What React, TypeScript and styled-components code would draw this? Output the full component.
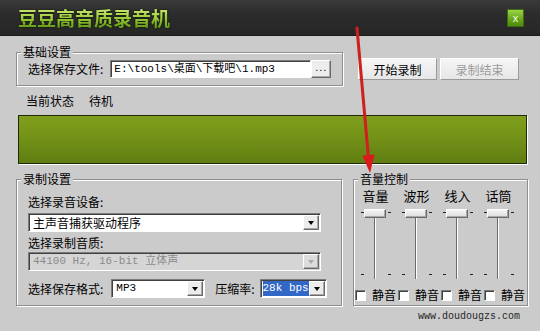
import styled, { createGlobalStyle } from "styled-components";

const GlobalStyle = createGlobalStyle`
  html, body {
    margin: 0;
    padding: 0;
    background: #cccbcc;
  }
  body {
    font-family: "Noto Sans CJK SC", "Liberation Sans", sans-serif;
    font-size: 12px;
    color: #000;
  }
`;

const MONO = `"Liberation Mono", "Noto Sans CJK SC", monospace`;

const channels = ["音量", "波形", "线入", "话筒"];

export default function App() {
  return (
    <>
      <GlobalStyle />
      <Window>
        <TitleBar>
          <Title>豆豆高音质录音机</Title>
          <CloseButton>x</CloseButton>
        </TitleBar>

        <Body>
          <TopRow>
            <Group $width={327} $height={34}>
              <Legend>基础设置</Legend>
              <FileRow>
                <Label>选择保存文件:</Label>
                <PathInput>E:\tools\桌面\下载吧\1.mp3</PathInput>
                <BrowseButton>...</BrowseButton>
              </FileRow>
            </Group>
            <ActionButtons>
              <Button>开始录制</Button>
              <Button disabled>录制结束</Button>
            </ActionButtons>
          </TopRow>

          <StatusRow>
            <span>当前状态</span>
            <span>待机</span>
          </StatusRow>

          <Meter />

          <BottomRow>
            <Group $width={326} $height={127}>
              <Legend>录制设置</Legend>
              <RecordBody>
                <Label>选择录音设备:</Label>
                <Select $width={293} $top={3}>
                  <SelectValue>主声音捕获驱动程序</SelectValue>
                  <Arrow />
                </Select>
                <Label $top={3}>选择录制音质:</Label>
                <Select $width={293} $top={1} $disabled>
                  <SelectValue $mono $disabled>
                    44100 Hz, 16-bit 立体声
                  </SelectValue>
                  <Arrow $disabled />
                </Select>
                <FormatRow>
                  <Label>选择保存格式:</Label>
                  <Select $width={94} $left={8}>
                    <SelectValue $mono>MP3</SelectValue>
                    <Arrow />
                  </Select>
                  <Label $left={10}>压缩率:</Label>
                  <Select $width={67} $left={5}>
                    <SelectValue $mono $selected>
                      <span>128k bps</span>
                    </SelectValue>
                    <Arrow />
                  </Select>
                </FormatRow>
              </RecordBody>
            </Group>

            <Group $width={175} $height={127}>
              <Legend>音量控制</Legend>
              <Channels>
                {channels.map((name) => (
                  <Channel key={name}>
                    <ChannelName>{name}</ChannelName>
                    <Slider>
                      <Tick $side="left" $top={3} />
                      <Tick $side="right" $top={3} />
                      <Track />
                      <Tick $side="left" $top={65} />
                      <Tick $side="right" $top={65} />
                      <Thumb />
                    </Slider>
                  </Channel>
                ))}
              </Channels>
              <MuteRow>
                {channels.map((name) => (
                  <Mute key={name}>
                    <CheckBox />
                    <span>静音</span>
                  </Mute>
                ))}
              </MuteRow>
            </Group>
          </BottomRow>
        </Body>

        <SiteMark>www.doudougzs.com</SiteMark>

        <ArrowOverlay width="540" height="331" viewBox="0 0 540 331">
          <line
            x1="357"
            y1="28"
            x2="368.4"
            y2="157"
            stroke="#cf1f1f"
            strokeWidth="3"
            strokeLinecap="round"
          />
          <polygon points="362.4,155.6 374.6,154.6 370,173" fill="#d81c1c" />
        </ArrowOverlay>
      </Window>
    </>
  );
}

const Window = styled.div`
  position: relative;
  overflow: hidden;

  width: 540px;
  height: 331px;

  background: #cccbcc;
`;

const TitleBar = styled.div`
  display: flex;
  align-items: center;
  justify-content: space-between;
  height: 36px;
  padding: 0 16px 0 18px;
  box-sizing: border-box;

  background: linear-gradient(#3a3a3a, #2c2c2c 40%, #262626);
  border-bottom: 1px solid #1c1c1c;
`;

const Title = styled.div`
  font-size: 19px;
  font-weight: 700;
  line-height: 22px;
  margin-top: 1px;

  background: linear-gradient(#d6ec80, #9ccc38 50%, #5e9214);
  -webkit-background-clip: text;
  background-clip: text;
  -webkit-text-fill-color: transparent;
  filter: drop-shadow(0 0 1px #0e1800);
`;

const CloseButton = styled.div`
  display: flex;
  align-items: center;
  justify-content: center;
  width: 17px;
  height: 18px;

  font-family: "Liberation Sans", sans-serif;
  font-size: 11px;
  color: #f2ffe0;

  background: linear-gradient(#9ad448, #6aa81c 55%, #4f8a10);
  border: 1px solid #3c6a0c;
  box-sizing: border-box;
`;

const Body = styled.div`
  padding: 16px 0 0 16px;
`;

const TopRow = styled.div`
  display: flex;
  align-items: flex-start;
`;

const Group = styled.div<{ $width: number; $height: number }>`
  position: relative;
  box-sizing: border-box;
  width: ${(p) => p.$width}px;
  height: ${(p) => p.$height}px;

  border: 1px solid #8e8e8e;
  box-shadow: inset 1px 1px 0 #fff, 1px 1px 0 #fff;
`;

const Legend = styled.span`
  position: absolute;
  top: -9px;
  left: 4px;
  padding: 0 2px;

  line-height: 16px;
  background: #cccbcc;
`;

const FileRow = styled.div`
  display: flex;
  align-items: center;
  padding: 7px 0 0 11px;
`;

const Label = styled.div<{ $top?: number; $left?: number }>`
  line-height: 16px;
  white-space: nowrap;
  margin-top: ${(p) => p.$top ?? 0}px;
  margin-left: ${(p) => p.$left ?? 0}px;
`;

const sunken = `
  box-sizing: border-box;
  border: 1px solid;
  border-color: #7c7c7c #fff #fff #7c7c7c;
  box-shadow: inset 1px 1px 0 #404040;
`;

const PathInput = styled.div`
  ${sunken}
  width: 201px;
  height: 18px;
  margin-left: 7px;
  padding: 1px 0 0 3px;
  overflow: hidden;

  font-family: ${MONO};
  font-size: 11px;
  line-height: 14px;
  white-space: nowrap;
  background: #fff;
`;

const raised = `
  box-sizing: border-box;
  border: 1px solid;
  border-color: #fff #6a6a6a #6a6a6a #fff;
  box-shadow: inset -1px -1px 0 #a8a8a8;
`;

const BrowseButton = styled.div`
  ${raised}
  width: 20px;
  height: 18px;

  font-family: "Liberation Sans", sans-serif;
  font-size: 11px;
  line-height: 13px;
  text-align: center;
  letter-spacing: 1px;
  background: #ededed;
`;

const ActionButtons = styled.div`
  display: flex;
  gap: 3px;
  margin: 6px 0 0 15px;
`;

const Button = styled.button`
  ${raised}
  width: 79px;
  height: 22px;
  padding: 0;

  font-family: inherit;
  font-size: 12px;
  color: #000;
  background: linear-gradient(#f6f6f6, #e6e6e6);
  border-color: #fff #9a9a9a #9a9a9a #fff;
  box-shadow: none;

  &:disabled {
    color: #9c9c9c;
  }
`;

const StatusRow = styled.div`
  display: flex;
  gap: 15px;
  margin-top: 7px;
  padding-left: 10px;
  line-height: 16px;
`;

const Meter = styled.div`
  box-sizing: border-box;
  width: 509px;
  height: 49px;
  margin: 6px 0 0 2px;

  background:
    radial-gradient(circle, rgba(30, 50, 0, 0.16) 0.7px, transparent 0.9px) 0 0 / 2px 2px,
    linear-gradient(#93b322, #84a41c 45%, #6c8c15);
  border: 1px solid #1f2a06;
  box-shadow: 1px 1px 0 #fff;
`;

const BottomRow = styled.div`
  display: flex;
  gap: 11px;
  margin-top: 15px;
`;

const RecordBody = styled.div`
  display: flex;
  flex-direction: column;
  align-items: flex-start;
  padding: 14px 0 0 11px;
`;

const Select = styled.div<{
  $width: number;
  $top?: number;
  $left?: number;
  $disabled?: boolean;
}>`
  ${sunken}
  display: flex;
  align-items: center;
  width: ${(p) => p.$width}px;
  height: 19px;
  margin-top: ${(p) => p.$top ?? 0}px;
  margin-left: ${(p) => p.$left ?? 0}px;
  padding: 1px 1px 1px 2px;

  background: ${(p) => (p.$disabled ? "#d6d5d6" : "#fff")};
`;

const FormatRow = styled.div`
  display: flex;
  align-items: center;
  margin-top: 8px;
`;

const SelectValue = styled.div<{
  $mono?: boolean;
  $disabled?: boolean;
  $selected?: boolean;
}>`
  display: flex;
  justify-content: ${(p) => (p.$selected ? "flex-end" : "flex-start")};
  flex: 1;
  align-self: stretch;
  min-width: 0;
  overflow: hidden;
  padding-left: ${(p) => (p.$selected ? 0 : 2)}px;

  font-family: ${(p) => (p.$mono ? MONO : "inherit")};
  font-size: ${(p) => (p.$mono ? 11 : 12)}px;
  line-height: 15px;
  white-space: nowrap;
  color: ${(p) => (p.$disabled ? "#8c8c8c" : p.$selected ? "#fff" : "#000")};
  background: ${(p) => (p.$selected ? "#3168c8" : "transparent")};

  span {
    flex: none;
  }
`;

const Arrow = styled.div<{ $disabled?: boolean }>`
  ${raised}
  position: relative;
  flex: none;
  width: 16px;
  height: 15px;
  background: ${(p) => (p.$disabled ? "#dcdcdc" : "#ececec")};

  &::after {
    content: "";
    position: absolute;
    left: 4px;
    top: 5px;
    border-left: 3.5px solid transparent;
    border-right: 3.5px solid transparent;
    border-top: 4px solid ${(p) => (p.$disabled ? "#a8a8a8" : "#000")};
  }
`;

const Channels = styled.div`
  display: grid;
  grid-template-columns: repeat(4, 41px);
  padding: 8px 0 0 1px;
`;

const Channel = styled.div`
  display: flex;
  flex-direction: column;
  align-items: center;
`;

const ChannelName = styled.div`
  font-size: 13px;
  line-height: 16px;
`;

const Slider = styled.div`
  position: relative;
  width: 41px;
  height: 72px;
  margin-top: 5px;
`;

const Track = styled.div`
  position: absolute;
  left: 19px;
  top: 8px;
  width: 1px;
  height: 62px;

  background: #6a6a6a;
  box-shadow: 1px 0 0 #fff;
`;

const Thumb = styled.div`
  ${raised}
  position: absolute;
  left: 9px;
  top: 0;
  width: 22px;
  height: 9px;

  background: linear-gradient(#f4f4f4, #dedede);
  border-color: #fff #6a6a6a #6a6a6a #fff;
`;

const Tick = styled.div<{ $side: "left" | "right"; $top: number }>`
  position: absolute;
  top: ${(p) => p.$top}px;
  left: ${(p) => (p.$side === "left" ? 6 : 33)}px;
  width: 3px;
  height: 1px;
  background: #222;
`;

const MuteRow = styled.div`
  display: flex;
  gap: 2px;
  margin-top: 6px;
  padding-left: 1px;
`;

const Mute = styled.div`
  display: flex;
  align-items: center;
  gap: 6px;
  width: 41px;
  font-size: 12px;
  line-height: 16px;
`;

const CheckBox = styled.div`
  ${sunken}
  flex: none;
  width: 11px;
  height: 11px;
  background: #fff;
`;

const SiteMark = styled.div`
  position: absolute;
  left: 418px;
  top: 310px;

  font-family: ${MONO};
  font-size: 10px;
  line-height: 14px;
  color: #262626;
`;

const ArrowOverlay = styled.svg`
  position: absolute;
  left: 0;
  top: 0;
  pointer-events: none;
`;
